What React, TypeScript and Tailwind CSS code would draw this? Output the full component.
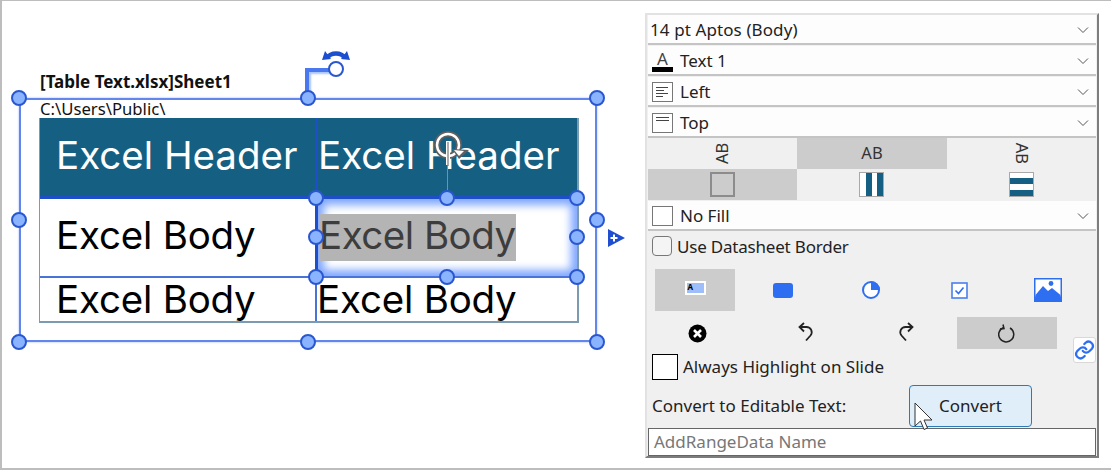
import type { ReactNode } from "react";

const handleSpots = [
  "left-[19px] top-[98px]",
  "left-[308px] top-[98px]",
  "left-[597px] top-[98px]",
  "left-[19px] top-[220px]",
  "left-[597px] top-[220px]",
  "left-[19px] top-[342px]",
  "left-[308px] top-[342px]",
  "left-[597px] top-[342px]",
  "left-[316px] top-[198px]",
  "left-[447px] top-[198px]",
  "left-[577px] top-[198px]",
  "left-[316px] top-[237px]",
  "left-[577px] top-[237px]",
  "left-[316px] top-[277px]",
  "left-[447px] top-[277px]",
  "left-[577px] top-[277px]",
];

const Chevron = () => (
  <svg width="12" height="8" viewBox="0 0 12 8" className="mr-[7px] shrink-0" fill="none" stroke="#555" strokeWidth="1">
    <path d="M1 1.5 L6 6.5 L11 1.5" />
  </svg>
);

const SelectRow = ({ children }: { children: ReactNode }) => (
  <div className="flex h-[30px] items-center justify-between border-b-2 border-[#c4c4c4] bg-[#fdfdfd] pl-[4px] pt-[2px] text-[17px] text-[#222]">
    <div className="flex items-center">{children}</div>
    <Chevron />
  </div>
);

const BoxIcon = ({ children }: { children?: ReactNode }) => (
  <div className="mr-[7px] flex h-[20px] w-[21px] flex-col justify-center gap-[2px] border border-[#777] bg-white px-[3px]">{children}</div>
);

const App = () => {
  return (
    <div className="relative flex h-[470px] w-[1111px] overflow-hidden border-t border-l-2 border-b-2 border-[#bdbdbd] bg-white font-['Noto_Sans',sans-serif]">
      {/* slide canvas */}
      <div className="relative h-full w-[643px] shrink-0 -translate-x-[2px] -translate-y-[1px]">
        <div className="absolute left-[40px] top-[71px] text-[17px] leading-[21px] font-bold whitespace-nowrap text-[#111]">[Table Text.xlsx]Sheet1</div>
        <div className="absolute left-[40px] top-[98px] text-[16.7px] leading-[21px] whitespace-nowrap text-[#111]">C:\Users\Public\</div>

        <div className="absolute left-[39px] top-[118px] grid h-[205px] w-[540px] grid-cols-[275px_1fr] grid-rows-[78px_80px_45px] border-r-2 border-b-2 border-l border-[#7a9bb0] font-['Inter',sans-serif] text-[38.5px] leading-none tracking-[-0.2px] text-black">
          <div className="flex items-center bg-[#156082] pb-[4px] pl-[16px] tracking-[0px] text-white">Excel Header</div>
          <div className="flex items-center border-l-[3px] border-[#1f4fc8] bg-[#156082] pb-[4px] tracking-[0px] text-white">Excel Header</div>
          <div className="flex items-center border-t-[3px] border-[#1f4fc8] pb-[4px] pl-[16px]">Excel Body</div>
          <div className="flex items-center border-t-[3px] border-l-[3px] border-[#1f4fc8] pl-[1px] shadow-[inset_0_0_8px_6px_#7ea6ff]">
            <span className="bg-[#b4b4b4] pt-[2px] pb-[6px] tracking-[-0.5px] text-[#3d3d3d]">Excel Body</span>
          </div>
          <div className="flex items-center border-t-[2px] border-[#4a73d8] pb-[1px] pl-[16px]">Excel Body</div>
          <div className="flex items-center border-t-[2px] border-l-[2px] border-[#4a73d8] pb-[1px]">Excel Body</div>
        </div>

        {/* outer selection frame */}
        <div className="absolute left-[19px] top-[98px] h-[244px] w-[578px] border-2 border-[#6286ec] shadow-[0_0_2px_#9db8ff]" />
        <div className="absolute left-[305px] top-[68px] h-[30px] w-[30px] border-t-[4px] border-l-[4px] border-[#4a78ee] shadow-[inset_2px_2px_2px_#a9c4ff]" />

        {handleSpots.map((spot) => (
          <div key={spot} className={`absolute ${spot} h-[16px] w-[16px] -translate-x-1/2 -translate-y-1/2 rounded-full border-2 border-[#2a57d0] bg-[#8ab4ff]`} />
        ))}
        <div className="absolute left-[328px] top-[61px] h-[16px] w-[16px] rounded-full border-2 border-[#2a57d0] bg-white" />

        {/* rotate arrow above the handle */}
        <svg className="absolute left-[322px] top-[49px]" width="28" height="13" viewBox="0 0 28 13">
          <path d="M5 9 C9 3 19 3 23 9" fill="none" stroke="#1c4fd0" strokeWidth="4.5" />
          <path d="M0 11 L3 2 L9 10 Z M28 11 L25 2 L19 10 Z" fill="#1c4fd0" />
        </svg>

        {/* rotate cursor over the header */}
        <div className="absolute left-[447px] top-[160px] h-[30px] w-px bg-[#8a8a8a]" />
        <svg className="absolute left-[432px] top-[130px]" width="40" height="36" viewBox="0 0 40 36">
          <circle cx="16" cy="15" r="11" fill="none" stroke="#5f5f5f" strokeWidth="6" />
          <circle cx="16" cy="15" r="11" fill="none" stroke="#fff" strokeWidth="2.5" />
          <path d="M20 19 L37 20 L27 29 Z" fill="#5f5f5f" />
          <path d="M22 20 L32 21 L27 26 Z" fill="#fff" />
          <rect x="14" y="11" width="4" height="24" fill="#fff" />
          <rect x="15.4" y="12" width="1.2" height="24" fill="#777" />
        </svg>

        {/* add-row marker */}
        <svg className="absolute left-[608px] top-[229px]" width="17" height="18" viewBox="0 0 17 18">
          <path d="M0 0 L17 9 L0 18 Z" fill="#1f4fd0" />
          <path d="M2.5 9 H9.5 M6 5.5 V12.5" stroke="#fff" strokeWidth="2" />
        </svg>
      </div>

      {/* properties panel */}
      <div className="relative mt-[12px] mb-[10px] flex w-[454px] flex-col border-2 border-t-[#e2e2e2] border-r-[#7d7d7d] border-b-[#7d7d7d] border-l-[#e2e2e2] bg-[#f0f0f0] px-[1px]">
        <SelectRow>
          <span className="-ml-[2px] tracking-[0.1px]">14 pt Aptos (Body)</span>
        </SelectRow>
        <div className="mt-px">
          <SelectRow>
            <div className="mr-[7px] flex w-[21px] flex-col items-center">
              <span className="text-[17px] leading-[17px] text-[#444]">A</span>
              <div className="h-[5px] w-[21px] bg-black" />
            </div>
            Text 1
          </SelectRow>
        </div>
        <div className="mt-px">
          <SelectRow>
            <BoxIcon>
              <div className="h-[1px] w-[12px] bg-[#444]" />
              <div className="h-[1px] w-[8px] bg-[#444]" />
              <div className="h-[1px] w-[12px] bg-[#444]" />
              <div className="h-[1px] w-[7px] bg-[#444]" />
            </BoxIcon>
            Left
          </SelectRow>
        </div>
        <div className="mt-px">
          <SelectRow>
            <div className="mr-[7px] flex h-[20px] w-[21px] flex-col gap-[2px] border border-[#777] bg-white px-[3px] pt-[3px]">
              <div className="h-[1px] w-full bg-[#444]" />
              <div className="h-[1px] w-full bg-[#444]" />
            </div>
            Top
          </SelectRow>
        </div>

        <div className="grid grid-cols-3 text-[#333]">
          <div className="flex h-[31px] items-center justify-center">
            <span className="-rotate-90 text-[16.5px]">AB</span>
          </div>
          <div className="flex h-[31px] items-center justify-center bg-[#cccccc]">
            <span className="text-[16.5px]">AB</span>
          </div>
          <div className="flex h-[31px] items-center justify-center">
            <span className="rotate-90 text-[16.5px]">AB</span>
          </div>
          <div className="flex h-[31px] items-center justify-center bg-[#cccccc]">
            <div className="h-[25px] w-[25px] border-2 border-[#8c8c8c]" />
          </div>
          <div className="flex h-[31px] items-center justify-center">
            <div className="flex h-[25px] w-[25px] border border-[#a8a8a8] bg-white pl-[6px]">
              <div className="h-full w-[6px] bg-[#156082]" />
              <div className="ml-[5px] h-full w-[6px] bg-[#156082]" />
            </div>
          </div>
          <div className="flex h-[31px] items-center justify-center">
            <div className="flex h-[25px] w-[25px] flex-col border border-[#a8a8a8] bg-white pt-[5px]">
              <div className="h-[6px] w-full bg-[#156082]" />
              <div className="mt-[6px] h-[6px] w-full bg-[#156082]" />
            </div>
          </div>
        </div>

        <div className="mt-px">
          <SelectRow>
            <BoxIcon />
            No Fill
          </SelectRow>
        </div>

        <div className="mt-[3px] flex items-center pl-[4px] text-[17px] tracking-[-0.2px] text-[#222]">
          <div className="mr-[5px] h-[20px] w-[20px] rounded-[4px] border border-[#777] bg-[#f4f4f4]" />
          Use Datasheet Border
        </div>

        {/* shape type buttons */}
        <div className="mt-[10px] ml-[7px] grid w-[436px] grid-cols-[84px_88px_88px_88px_88px]">
          <div className="flex h-[42px] w-[80px] items-center justify-center bg-[#cccccc] pb-[4px]">
            <div className="flex h-[14px] w-[21px] items-center border-2 border-white bg-[#9dbdfb]">
              <span className="-mt-[2px] ml-[1px] text-[8px] leading-none font-bold text-black">A</span>
            </div>
          </div>
          <div className="flex h-[42px] items-center justify-center">
            <div className="h-[15px] w-[20px] rounded-[3px] bg-[#2e6ff2]" />
          </div>
          <div className="flex h-[42px] items-center justify-center">
            <svg width="20" height="20" viewBox="0 0 20 20">
              <circle cx="10" cy="10" r="8" fill="#fff" stroke="#2e6ff2" strokeWidth="2" />
              <path d="M10 10 V1 A9 9 0 0 1 19 10 Z" fill="#2e6ff2" />
            </svg>
          </div>
          <div className="flex h-[42px] items-center justify-center">
            <svg width="17" height="17" viewBox="0 0 17 17">
              <rect x="1" y="1" width="15" height="15" fill="#fff" stroke="#4a80ee" strokeWidth="1.6" />
              <path d="M4.5 8.5 L7.5 11.5 L12.5 5.5" fill="none" stroke="#2e6ff2" strokeWidth="1.6" />
            </svg>
          </div>
          <div className="flex h-[42px] items-center justify-center pl-[2px]">
            <svg width="28" height="24" viewBox="0 0 28 24">
              <rect width="28" height="24" fill="#2e6ff2" />
              <rect x="1.5" y="1.5" width="25" height="17" fill="#fff" />
              <circle cx="17" cy="5.5" r="2.4" fill="#2e6ff2" />
              <path d="M1.5 17 L9 8 L14 13 L18 10 L26.5 17 V24 H1.5 Z" fill="#2e6ff2" />
            </svg>
          </div>
        </div>

        {/* action buttons */}
        <div className="mt-[6px] flex h-[32px] items-center text-[#222]">
          <div className="flex w-[98px] justify-center">
            <svg width="19" height="19" viewBox="0 0 19 19">
              <circle cx="9.5" cy="9.5" r="9" fill="#000" />
              <path d="M6 6 L13 13 M13 6 L6 13" stroke="#fff" strokeWidth="2.6" />
            </svg>
          </div>
          <div className="flex w-[110px] justify-center pb-[2px] pl-[10px]">
            <svg width="16" height="20" viewBox="0 0 16 20" fill="none" stroke="#222" strokeWidth="1.8">
              <path d="M6 1 L1.5 5 L6 9.5" />
              <path d="M2 5 H8.5 A5.2 5.2 0 0 1 12.5 13.5 L8 18.5" />
            </svg>
          </div>
          <div className="flex w-[100px] justify-center pb-[2px]">
            <svg width="16" height="20" viewBox="0 0 16 20" fill="none" stroke="#222" strokeWidth="1.8">
              <path d="M10 1 L14.5 5 L10 9.5" />
              <path d="M14 5 H7.5 A5.2 5.2 0 0 0 3.5 13.5 L8 18.5" />
            </svg>
          </div>
          <div className="ml-[1px] flex h-[32px] w-[100px] items-center justify-center bg-[#cccccc]">
            <svg width="18" height="19" viewBox="0 0 18 19" fill="none" stroke="#222" strokeWidth="1.5">
              <path d="M5.5 3.5 A7.5 7.5 0 1 0 12 4" />
              <path d="M5 0.5 L6 4.5 L2 5" />
            </svg>
          </div>
        </div>

        <div className="absolute left-[426px] top-[322px] flex h-[26px] w-[23px] items-center justify-center rounded-[3px] border border-[#d8d8d8] bg-white">
          <svg width="21" height="22" viewBox="0 0 24 24" fill="none" stroke="#2e6ff2" strokeWidth="2.6" strokeLinecap="round">
            <path d="M10 13a5 5 0 0 0 7.5.5l3-3a5 5 0 0 0-7-7l-1.7 1.7" />
            <path d="M14 11a5 5 0 0 0-7.5-.5l-3 3a5 5 0 0 0 7 7l1.7-1.7" />
          </svg>
        </div>

        <div className="mt-[5px] flex items-center pl-[4px] text-[17px] text-[#222]">
          <div className="mr-[5px] h-[26px] w-[26px] border border-black bg-white" />
          Always Highlight on Slide
        </div>

        <div className="mt-[5px] flex items-center pl-[4px] text-[17px] text-[#222]">
          <span className="w-[257px]">Convert to Editable Text:</span>
          <button className="h-[42px] w-[123px] rounded-[4px] border border-[#2c7ab8] bg-[#e0eef9] text-[17px] text-[#222]">Convert</button>
        </div>

        <div className="mt-px flex h-[29px] items-center border border-[#666] bg-white pl-[5px] text-[17px] text-[#777]">AddRangeData Name</div>

        <svg className="absolute left-[267px] top-[387px]" width="20" height="29" viewBox="0 0 20 29">
          <path d="M1 1 V24 L6.5 19 L10 27.5 L13.5 26 L10 18 H18 Z" fill="#fff" stroke="#333" strokeWidth="1" />
        </svg>
      </div>
    </div>
  );
};

export default App;
